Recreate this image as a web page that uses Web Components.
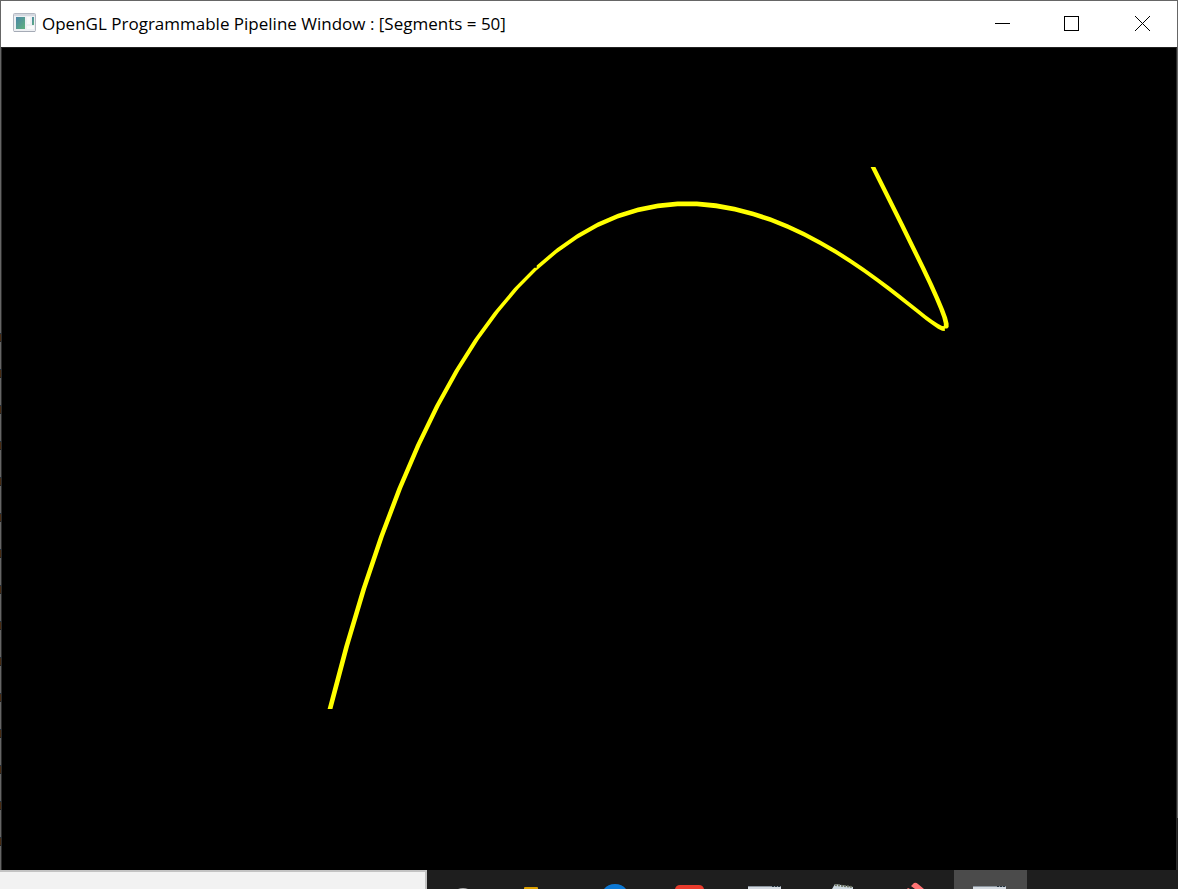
<!DOCTYPE html>
<html lang="en">
<head>
<meta charset="utf-8">
<title>OpenGL Programmable Pipeline Window</title>
<style>
  html, body { margin: 0; height: 100%; background: #000; }
</style>
</head>
<body>
<desktop-screen>
  <app-window caption="OpenGL Programmable Pipeline Window : [Segments = 50]">
    <bezier-canvas segments="50"></bezier-canvas>
  </app-window>
  <task-bar slot="taskbar"></task-bar>
</desktop-screen>

<script>
const define = (name, html, setup) => {
  const template = document.createElement('template');
  template.innerHTML = html;
  customElements.define(name, class extends HTMLElement {
    constructor() {
      super();
      this.attachShadow({ mode: 'open' }).append(template.content.cloneNode(true));
    }
    connectedCallback() { if (setup) setup(this, this.shadowRoot); }
  });
};

define('desktop-screen', `
  <style>
    :host { display: grid; grid-template-rows: minmax(0, 1fr) auto; height: 100vh; overflow: hidden; }
  </style>
  <slot></slot>
  <slot name="taskbar"></slot>
`);

define('window-controls', `
  <style>
    :host { display: flex; }
    button { width: 70px; height: 44px; padding: 0; border: 0; background: none; color: #000; display: grid; place-items: center; }
    button:hover { background: #e5e5e5; }
    svg { display: block; fill: none; stroke: currentColor; }
  </style>
  <button type="button" aria-label="Minimize"><svg width="15" height="15" shape-rendering="crispEdges"><path d="M0 7.5H15"/></svg></button>
  <button type="button" aria-label="Maximize"><svg width="16" height="15" shape-rendering="crispEdges"><path d="M.5.5h14v14H.5z"/></svg></button>
  <button type="button" aria-label="Close"><svg width="15" height="15"><path d="M0 0L15 15M15 0L0 15"/></svg></button>
`);

define('app-window', `
  <style>
    :host { display: flex; flex-direction: column; min-height: 0; position: relative; background: #000; }
    header { display: flex; align-items: center; box-sizing: border-box; height: 48px; padding-bottom: 2px; border-top: 1px solid #666; border-bottom: 1px solid #222; margin: 0 1px; background: #fff; }
    .icon { margin: 0 6px 2px 12px; flex: none; }
    h1 { flex: 1; min-width: 0; margin: 0; padding-top: 2px; font: 400 17px/24px "Segoe UI", "Open Sans", sans-serif; color: #000; white-space: nowrap; }
    .body { flex: 1; min-height: 0; display: flex; border: solid #2b2b2b; border-width: 0 1px; margin: 0 1px; }
    .edge { position: absolute; top: 0; bottom: 0; width: 1px; background: #666; }
    .left { left: 0; background: linear-gradient(#666 0 330px, transparent 330px), repeating-linear-gradient(#666 0 9px, #234 9px 10px, #4a2d14 10px 17px, #222 17px 18px, #666 18px 36px); }
    .right { right: 0; background: linear-gradient(#666 0 818px, #222 818px); }
  </style>
  <header>
    <svg class="icon" width="23" height="19" viewBox="0 0 23 19">
      <defs><linearGradient id="g" x1="0" y1="0" x2="1" y2="1"><stop stop-color="#4a86a8"/><stop offset="1" stop-color="#62b27d"/></linearGradient></defs>
      <rect x=".5" y=".5" width="22" height="18" rx="1" fill="#eef0f3" stroke="#b3b8c2"/>
      <path d="M1 2h21" stroke="#d5d9e0" stroke-width="2"/>
      <path d="M1 18.5h21" stroke="#a5abb6"/>
      <path d="M3 4h9v12H3z" fill="url(#g)"/>
      <path d="M14 4h3v7h-3zM14 13h7v3h-7z" fill="#fafafa"/>
      <path d="M19 4h2v8h-2z" fill="url(#g)"/>
    </svg>
    <h1></h1>
    <window-controls></window-controls>
  </header>
  <div class="body"><slot></slot></div>
  <span class="edge left"></span><span class="edge right"></span>
`, (host, root) => { root.querySelector('h1').textContent = host.getAttribute('caption'); });

define('bezier-canvas', `
  <style>
    :host { display: block; flex: 1; min-width: 0; min-height: 0; background: #000; overflow: hidden; }
    svg { display: block; width: 100%; height: 100%; }
  </style>
  <svg viewBox="0 0 1174 822" role="img" aria-label="Bezier curve"><path fill="#ff0"/></svg>
`, (host, root) => {
  // Each segment is a band with a fixed width along its minor axis, as GL rasterises wide lines.
  const control = [[328, 661], [599, -423], [1141, 660], [871, 119]];
  const n = +host.getAttribute('segments');
  const at = t => [0, 1].map(k => {
    const u = 1 - t, p = control.map(c => c[k]);
    return u*u*u*p[0] + 3*u*u*t*p[1] + 3*u*t*t*p[2] + t*t*t*p[3];
  });
  const half = 2.4;
  let d = '';
  for (let i = 0; i < n; i++) {
    const [a, b] = at(i / n), [c, e] = at((i + 1) / n);
    const flat = Math.abs(c - a) > Math.abs(e - b);
    const x = flat ? 0 : half, y = flat ? half : 0;
    const flip = flat ? c < a : e > b;
    const pts = [[a - x, b - y], [c - x, e - y], [c + x, e + y], [a + x, b + y]];
    if (flip) pts.reverse();
    d += 'M' + pts.map(p => p.join(' ')).join('L') + 'Z';
  }
  root.querySelector('path').setAttribute('d', d);
});

define('task-icon', `
  <style>
    :host { display: block; flex: none; width: 75px; height: 19px; }
    :host([active]) { background: linear-gradient(90deg, transparent 2px, #4b4b4b 2px); }
    button { display: block; width: 75px; height: 19px; padding: 0; border: 0; background: none; }
    svg { display: block; }
  </style>
  <button type="button"><svg width="75" height="19" viewBox="0 0 75 19"></svg></button>
`, (host, root) => {
  const windowTop = '<path d="M21 16h33v3H21z" fill="#d2d8df"/><path d="M21 16.5h33" stroke="#8b949d"/><path d="M45 16.5h2M48 16.5h2M51 16.5h2" stroke="#26343e"/>';
  const art = {
    Cortana: '<path d="M31 19q5-2 10 0z" fill="#aaa"/>',
    Files: '<path d="M22 19v-1q0-1 1-1h12q1 0 1 1v1z" fill="#dca000"/>',
    Edge: '<path d="M27 19q4-5 11-5t11 5z" fill="#0c78d4"/>',
    Mail: '<path d="M23 19q1-4 5-4h19q4 0 5 4z" fill="#e93b2c"/>',
    Console: windowTop,
    Notepad: '<path d="M30 19l3-5 18 3v2z" fill="#ccd7df"/><path d="M33 15l18 2" stroke="#6d7464" stroke-width="2" stroke-dasharray="2 1"/>',
    Paint: '<path d="M34 16l3-3q2-1 4 1l6 5h-9z" fill="#ff7474"/><path d="M30 19l1-1 2 1z" fill="#ff7474"/>',
    OpenGL: windowTop
  };
  const name = host.getAttribute('name');
  root.querySelector('button').setAttribute('aria-label', name);
  root.querySelector('svg').innerHTML = art[name];
});

define('task-bar', `
  <style>
    :host { display: flex; height: 19px; background: #1e1e1e; overflow: hidden; }
    input { flex: none; box-sizing: border-box; width: 427px; height: 24px; padding: 0 12px; border: solid #c3c3c3; border-width: 2px 2px 0 0; border-radius: 0; background: #f2f2f2; outline: 0; }
    nav { display: flex; }
  </style>
  <input type="search" aria-label="Search">
  <nav aria-label="Applications">
    <task-icon name="Cortana"></task-icon>
    <task-icon name="Files"></task-icon>
    <task-icon name="Edge"></task-icon>
    <task-icon name="Mail"></task-icon>
    <task-icon name="Console"></task-icon>
    <task-icon name="Notepad"></task-icon>
    <task-icon name="Paint"></task-icon>
    <task-icon name="OpenGL" active></task-icon>
  </nav>
`);
</script>
</body>
</html>
